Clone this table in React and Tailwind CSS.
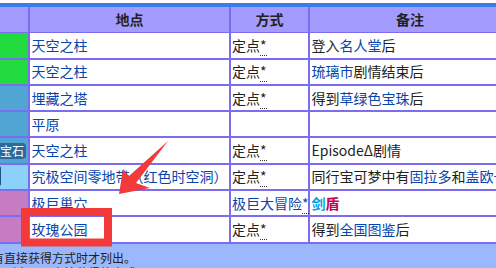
import React from "react";

const L = ({ children }) => <span className="text-[#0645ad]">{children}</span>;
const Star = () => <span className="border-b border-dotted border-[#333]">*</span>;
const Dd = () => (
  <span className="text-[#222]">
    定点<Star />
  </span>
);

const rows = [
  { bg: "bg-[#22dc3f]", place: "天空之柱", method: <Dd />, note: <>登入<L>名人堂</L>后</> },
  { bg: "bg-[#22dc3f]", place: "天空之柱", method: <Dd />, note: <><L>琉璃市</L>剧情结束后</> },
  { bg: "bg-[#50a5d5]", place: "埋藏之塔", method: <Dd />, note: <>得到<L>草绿色宝珠</L>后</> },
  { bg: "bg-[#50a5d5]", place: "平原", method: null, note: null },
  { bg: "bg-[#50a5d5]", place: "天空之柱", method: <Dd />, note: <>EpisodeΔ剧情</>, badge: true },
  { bg: "bg-[#8cd2f8]", place: "究极空间零地带（红色时空洞）", method: <Dd />, note: <>同行宝可梦中有<L>固拉多</L>和<L>盖欧卡</L></>, sliver: true },
  { bg: "bg-[#c67cc2]", place: "极巨巢穴", method: <span className="text-[#0645ad]">极巨大冒险<Star /></span>, note: <span className="font-bold"><span className="text-[#00a0e9]">剑</span><span className="text-[#c8005a]">盾</span></span> },
  { bg: "bg-[#c67cc2]", place: "玫瑰公园", method: <Dd />, note: <>得到<L>全国图鉴</L>后</> },
];

export default function App() {
  return (
    <div className="relative w-[496px] h-[268px] overflow-hidden bg-white font-['Noto_Sans_CJK_SC','Noto_Sans',sans-serif] text-[14px] text-[#222]">
      <div className="pt-[3px] -ml-[30px] w-max">
        <div className="border-t-[4px] border-[#3a7ceb] bg-[#7b6cf0] pb-[2px] grid grid-cols-[58px_199px_77px_200px] auto-rows-[24.3px] gap-[2px]">
          <div className="bg-[#a39bfd] h-[25px]" />
          <div className="bg-[#a39bfd] h-[25px] flex items-center justify-center font-bold">地点</div>
          <div className="bg-[#a39bfd] h-[25px] flex items-center justify-center font-bold">方式</div>
          <div className="bg-[#a39bfd] h-[25px] flex items-center justify-center font-bold">备注</div>
          {rows.map((r, i) => (
            <React.Fragment key={i}>
              <div className={`${r.bg} flex items-center justify-end pr-[2px] relative`}>
                {r.badge && (
                  <span className="bg-[#2d6a9c] text-white text-[12px] leading-[16px] rounded-[4px] px-[2px]">蓝宝石</span>
                )}
                {r.sliver && (
                  <span className="absolute left-[28px] top-[1px] w-[3px] h-[20px] bg-[#21518a] rounded-r-[2px]" />
                )}
              </div>
              <div className="bg-white flex items-center pl-[1.5px] whitespace-nowrap text-[#0645ad]">{r.place}</div>
              <div className="bg-white flex items-center pl-[1px] whitespace-nowrap">{r.method}</div>
              <div className="bg-white flex items-center pl-[1.5px] whitespace-nowrap">{r.note}</div>
            </React.Fragment>
          ))}
        </div>
        <div className="bg-[#9bb8fc] pt-[6px] pl-[10px] text-[12px] leading-[15px] h-[40px] w-[560px]">
          <div>当有直接获得方式时才列出。</div>
          <div>※只列出可以直接获得的方式。</div>
        </div>
      </div>
      <svg className="absolute left-0 top-0" width="496" height="268" viewBox="0 0 496 268">
        <polygon fill="#f23a3a" points="119,194 123,169 129,176 168,141 136,183 150,188" />
        <rect x="25" y="212" width="83" height="30.5" fill="none" stroke="#f23a3a" strokeWidth="8" />
      </svg>
    </div>
  );
}
